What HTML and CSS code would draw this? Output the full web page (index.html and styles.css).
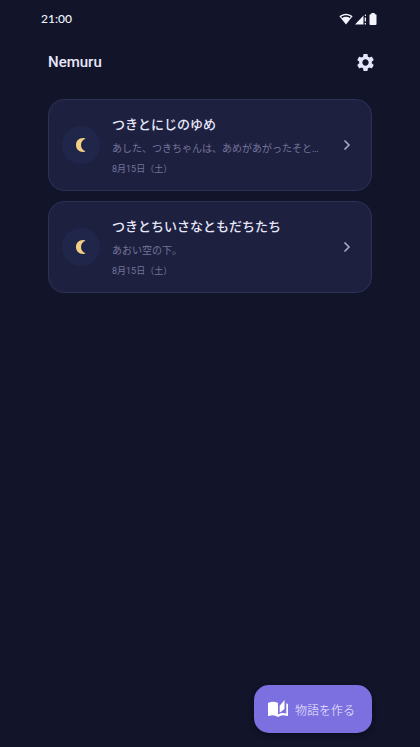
FILE: index.html
```html
<!DOCTYPE html>
<html lang="ja">
<head>
<meta charset="utf-8">
<meta name="viewport" content="width=device-width, initial-scale=1">
<title>Nemuru</title>
<link rel="stylesheet" href="styles.css">
</head>
<body>
<div class="app">
  <div class="status">
    <span class="time">21:00</span>
    <div class="status-icons">
      <svg width="14" height="12" viewBox="0 0 14 12"><path d="M7 11.500.4 3.200C4.200-.2 9.800-.2 13.600 3.200Z" fill="#f4f4fc"/><path d="M2.200 3.800C5 1.800 9 1.800 11.800 3.800L10.900 4.900C8.500 3.300 5.500 3.300 3.100 4.900Z" fill="#12142a"/></svg>
      <svg width="12" height="12" viewBox="0 0 12 12"><path d="M0 11.500 8.500 2.500V11.500ZM9.700 2.500 11 1V3H9.700ZM9.700 4.500H11V8.500H9.700ZM9.700 10H11V11.500H9.700Z" fill="#f4f4fc"/></svg>
      <svg width="8" height="12" viewBox="0 0 8 12"><path d="M2.300 0H5.700V1.300H6.500Q7.500 1.300 7.500 2.300V11Q7.500 12 6.500 12H1.500Q.5 12 .5 11V2.300Q.5 1.300 1.500 1.300H2.300Z" fill="#f4f4fc"/></svg>
    </div>
  </div>
  <header class="header">
    <h1>Nemuru</h1>
    <button class="settings" aria-label="設定">
      <svg width="21" height="21" viewBox="0 0 24 24"><path fill="#e6e6fa" d="M19.140 12.940c.04-.3.06-.61.06-.94 0-.32-.02-.64-.07-.94l2.030-1.580c.18-.14.23-.41.12-.61l-1.920-3.320c-.12-.22-.37-.29-.59-.22l-2.390.96c-.5-.38-1.030-.7-1.620-.94l-.36-2.540c-.04-.24-.24-.41-.48-.41h-3.840c-.24 0-.43.17-.47.41l-.36 2.540c-.59.24-1.130.57-1.620.94l-2.390-.96c-.22-.08-.47 0-.59.22L2.740 8.870c-.12.21-.08.47.12.61l2.030 1.580c-.05.3-.09.63-.09.94s.02.64.07.94l-2.030 1.580c-.18.14-.23.41-.12.61l1.920 3.320c.12.22.37.29.59.22l2.390-.96c.5.38 1.030.7 1.620.94l.36 2.540c.05.24.24.41.48.41h3.840c.24 0 .44-.17.47-.41l.36-2.540c.59-.24 1.130-.56 1.620-.94l2.390.96c.22.08.47 0 .59-.22l1.920-3.320c.12-.22.07-.47-.12-.61l-2.010-1.580zM12 15.600c-1.980 0-3.600-1.620-3.600-3.600s1.620-3.600 3.600-3.600 3.600 1.620 3.600 3.600-1.620 3.600-3.600 3.600z"/></svg>
    </button>
  </header>
  <main class="stories">
    <a class="card" href="#story-1">
      <span class="moon"><svg width="12" height="16" viewBox="0 0 12 16"><path d="M8.500 1C4 .8 1 3.900 1 8s3 7.200 7.500 7Q9.700 14.900 10.500 14.300C7.500 13.200 6 10.900 6 8s1.500-5.200 4.500-6.300Q9.700 1.100 8.500 1Z" fill="#f2cf83"/></svg></span>
      <span class="text">
        <span class="title">つきとにじのゆめ</span>
        <span class="excerpt">あした、つきちゃんは、あめがあがったそと…</span>
        <span class="date">8月15日（土）</span>
      </span>
      <svg class="chevron" width="8" height="12" viewBox="0 0 8 12"><path d="m1.500 1.500 4.500 4.500-4.500 4.500" fill="none" stroke="#a9a9c6" stroke-width="1.600"/></svg>
    </a>
    <a class="card" href="#story-2">
      <span class="moon"><svg width="12" height="16" viewBox="0 0 12 16"><path d="M8.500 1C4 .8 1 3.900 1 8s3 7.200 7.500 7Q9.700 14.900 10.500 14.300C7.500 13.200 6 10.900 6 8s1.500-5.200 4.500-6.300Q9.700 1.100 8.500 1Z" fill="#f2cf83"/></svg></span>
      <span class="text">
        <span class="title">つきとちいさなともだちたち</span>
        <span class="excerpt">あおい空の下。</span>
        <span class="date">8月15日（土）</span>
      </span>
      <svg class="chevron" width="8" height="12" viewBox="0 0 8 12"><path d="m1.500 1.500 4.500 4.500-4.500 4.500" fill="none" stroke="#a9a9c6" stroke-width="1.600"/></svg>
    </a>
  </main>
  <footer class="footer">
    <button class="create">
      <svg width="20" height="18" viewBox="0 0 20 18"><path d="M0 3Q5 .5 10 3V14.500Q14 12.300 18.300 13.600V3.300L20 4V15.600Q20 16.300 19.200 16Q14 14.300 10 17Q6 14.300.8 16Q0 16.300 0 15.600Z" fill="#fff"/><path d="M11.700 5.800 16.500 0V9L11.700 12.800Z" fill="#fff"/></svg>
      <span>物語を作る</span>
    </button>
  </footer>
</div>
</body>
</html>
```
FILE: styles.css
```css
* {
  box-sizing: border-box;
}

body {
  margin: 0;
  background: #12142a;
  color: #e8e8fb;
  font-family: Roboto, "Noto Sans CJK JP", sans-serif;
}

svg {
  display: block;
  flex: none;
}

button {
  border: 0;
  padding: 0;
  font: inherit;
  color: inherit;
  cursor: pointer;
}

.app {
  min-height: 100vh;
  display: flex;
  flex-direction: column;
}

.status {
  display: flex;
  align-items: center;
  justify-content: space-between;
  height: 38px;
  padding: 0 43px 0 41px;
}

.time {
  font: 500 12px/16px Lato, sans-serif;
  color: #f4f4fc;
}

.status-icons {
  display: flex;
  gap: 2px;
}

.header {
  display: flex;
  align-items: center;
  justify-content: space-between;
  height: 48px;
  padding: 0 44px 0 48px;
}

h1 {
  margin: 0;
  font-size: 15px;
  line-height: 20px;
  font-weight: 500;
}

.settings {
  background: none;
}

.stories {
  flex: 1;
  display: flex;
  flex-direction: column;
  gap: 10px;
  padding: 13px 48px 24px;
}

.card {
  display: flex;
  align-items: center;
  padding: 13px 20px 13px 13px;
  border: 1px solid #2d3154;
  border-radius: 16px;
  background: #1e2040;
  color: inherit;
  text-decoration: none;
}

.moon {
  display: flex;
  align-items: center;
  justify-content: center;
  flex: none;
  width: 38px;
  height: 38px;
  margin-right: 12px;
  border-radius: 50%;
  background: #20264a;
}

.text {
  display: flex;
  flex-direction: column;
  flex: 1;
  min-width: 0;
}

.title {
  font-size: 13px;
  line-height: 24px;
  font-weight: 500;
}

.excerpt {
  overflow: hidden;
  text-overflow: ellipsis;
  white-space: nowrap;
  font-size: 10px;
  line-height: 24px;
  color: #74759a;
}

.date {
  font-size: 9px;
  line-height: 16px;
  color: #74759a;
}

.footer {
  display: flex;
  justify-content: flex-end;
  padding: 0 48px 14px;
}

.create {
  display: flex;
  align-items: center;
  gap: 7px;
  height: 48px;
  padding: 0 17px 0 14px;
  border-radius: 15px;
  background: #7c6fe0;
  box-shadow: 0 2px 5px #0b0c1c;
  color: #f0eeff;
  font-size: 12px;
  font-weight: 300;
}
```
